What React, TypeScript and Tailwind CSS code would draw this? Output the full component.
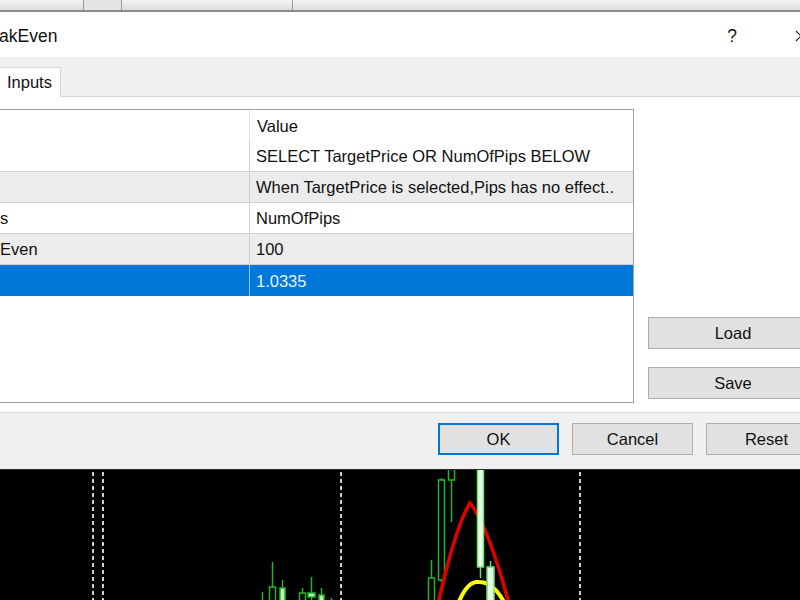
// Expert properties dialog (Inputs tab) sitting over a price chart.

type Row = { name: string; value: string; shade?: boolean; selected?: boolean };

const ROWS: Row[] = [
  { name: '', value: 'SELECT TargetPrice OR NumOfPips BELOW' },
  { name: '', value: 'When TargetPrice is selected,Pips has no effect..', shade: true },
  { name: 's', value: 'NumOfPips' },
  { name: 'Even', value: '100', shade: true },
  { name: '', value: '1.0335', selected: true },
];

type Candle = { x: number; hi: number; lo: number; top: number; bot: number; w: number; filled?: boolean };

// chart-local coordinates (chart top = 0)
const CANDLES: Candle[] = [
  { x: 262, hi: 122, lo: 132, top: 132, bot: 132, w: 0 },
  { x: 272, hi: 92, lo: 132, top: 117, bot: 134, w: 6 },
  { x: 282, hi: 110, lo: 132, top: 118, bot: 134, w: 5, filled: true },
  { x: 302, hi: 118, lo: 132, top: 123, bot: 134, w: 6 },
  { x: 311, hi: 107, lo: 132, top: 123, bot: 127, w: 7, filled: true },
  { x: 321, hi: 118, lo: 132, top: 125, bot: 134, w: 5, filled: true },
  { x: 331, hi: 128, lo: 132, top: 132, bot: 132, w: 0 },
  { x: 431, hi: 90, lo: 132, top: 108, bot: 134, w: 6 },
  { x: 441, hi: 8, lo: 112, top: 10, bot: 110, w: 6 },
  { x: 451, hi: -2, lo: 52, top: -2, bot: 10, w: 6 },
];

const BRIGHT: Candle[] = [
  { x: 480, hi: -2, lo: 108, top: -2, bot: 97, w: 6, filled: true },
  { x: 490, hi: 91, lo: 132, top: 97, bot: 134, w: 7, filled: true },
];

function CandleMark({ c, bright }: { c: Candle; bright?: boolean }) {
  const stroke = bright ? '#6ee06e' : '#1fb81f';
  const fill = bright ? '#e8ffe8' : c.filled ? '#b8f0b8' : 'none';
  return (
    <g>
      <line x1={c.x + 0.5} y1={c.hi} x2={c.x + 0.5} y2={c.lo} stroke={stroke} strokeWidth={1.5} />
      {c.w > 0 && (
        <rect
          x={c.x - c.w / 2 + 0.5}
          y={c.top}
          width={c.w}
          height={c.bot - c.top}
          fill={c.filled ? fill : '#000'}
          stroke={stroke}
          strokeWidth={1.5}
        />
      )}
    </g>
  );
}

function Chart() {
  return (
    <svg width="800" height="130" className="block bg-black">
      {[93, 103, 341, 580].map((x) => (
        <line key={x} x1={x} y1={2} x2={x} y2={130} stroke="#cfcfcf" strokeWidth={2} strokeDasharray="4 3" />
      ))}
      {CANDLES.map((c) => (
        <CandleMark key={c.x} c={c} />
      ))}
      <path d="M438 134 C 448 90, 458 52, 470 33 C 482 48, 494 78, 509 134" fill="none" stroke="#e00000" strokeWidth={3.5} />
      <path d="M458 134 C 465 116, 472 111, 479 112 C 489 112, 498 120, 505 134" fill="none" stroke="#ffff00" strokeWidth={4} />
      {BRIGHT.map((c) => (
        <CandleMark key={c.x} c={c} bright />
      ))}
    </svg>
  );
}

function Btn({ label, className }: { label: string; className: string }) {
  return (
    <div className={`h-[32px] shrink-0 flex items-center justify-center bg-[#e1e1e1] pt-px ${className}`}>
      {label}
    </div>
  );
}

export default function App() {
  return (
    <div className="w-[800px] h-[600px] overflow-hidden flex flex-col bg-[#f0f0f0] text-[16.5px] text-[#111] font-['Segoe_UI','Liberation_Sans',Arial,sans-serif]">
      {/* terminal toolbar peeking above the dialog */}
      <div className="h-[12px] shrink-0 flex border-b-2 border-[#8c8c8c] bg-gradient-to-b from-[#f4f4f4] to-[#dcdcdc]">
        <div className="w-[84px] border-r border-[#9a9a9a]" />
        <div className="w-[38px] border-r border-[#9a9a9a] bg-[#e4e4e4]" />
        <div className="w-[171px] border-r border-[#9a9a9a]" />
        <div className="flex-1" />
      </div>

      {/* title bar */}
      <div className="h-[45px] shrink-0 bg-white flex items-center pt-[3px]">
        <span className="text-[17.5px] -ml-px">akEven</span>
        <span className="ml-auto mr-[58px] text-[17.5px]">?</span>
        <svg width="10" height="12" className="shrink-0 -mr-[5px]" viewBox="0 0 10 12">
          <path d="M1 1 L11 11 M11 1 L1 11" stroke="#222" strokeWidth={1.2} />
        </svg>
      </div>

      {/* tabs */}
      <div className="h-[40px] shrink-0 flex items-end border-b border-[#d9d9d9]">
        <div className="h-[30px] w-[61px] -mb-px bg-white border-t border-r border-[#d9d9d9] flex items-center pl-[7px]">
          Inputs
        </div>
      </div>

      {/* inputs grid + load/save */}
      <div className="h-[316px] shrink-0 bg-white flex border-b border-[#dadada]">
        <div className="w-[634px] shrink-0 pt-[12px]">
          <div className="h-[294px] border-t border-r border-b border-[#a0a0a0] bg-white flex flex-col">
            <div className="h-[31px] flex shrink-0">
              <div className="w-[250px] border-r border-[#e4e4e4]" />
              <div className="flex-1 flex items-center pl-[7px] pt-px">Value</div>
            </div>
            {ROWS.map((r, i) => (
              <div
                key={i}
                className={`h-[31px] shrink-0 flex ${
                  r.selected
                    ? 'bg-[#0078d7] text-white'
                    : r.shade
                      ? 'bg-[#ececec] border-b border-[#d0d0d0]'
                      : 'bg-white border-b border-[#d0d0d0]'
                }`}
              >
                <div className={`w-[250px] flex items-center pt-px border-r ${r.selected ? 'border-[#9cc7ee]' : 'border-[#d0d0d0]'}`}>
                  {r.name}
                </div>
                <div className={`flex-1 flex items-center pl-[6px] pt-px ${r.selected ? 'text-[#e8f2ff]' : ''}`}>{r.value}</div>
              </div>
            ))}
          </div>
        </div>
        <div className="flex-1 flex flex-col pt-[220px] pl-[14px] gap-[18px]">
          <Btn label="Load" className="w-[170px] border border-[#adadad]" />
          <Btn label="Save" className="w-[170px] border border-[#adadad]" />
        </div>
      </div>

      {/* dialog buttons */}
      <div className="h-[56px] shrink-0 flex pl-[438px] pt-[10px] gap-[13px] bg-[#f0f0f0]">
        <Btn label="OK" className="w-[121px] border-2 border-[#0078d7]" />
        <Btn label="Cancel" className="w-[121px] border border-[#adadad]" />
        <Btn label="Reset" className="w-[121px] border border-[#adadad]" />
      </div>

      <div className="border-t border-[#2a2a2a] shrink-0">
        <Chart />
      </div>
    </div>
  );
}
